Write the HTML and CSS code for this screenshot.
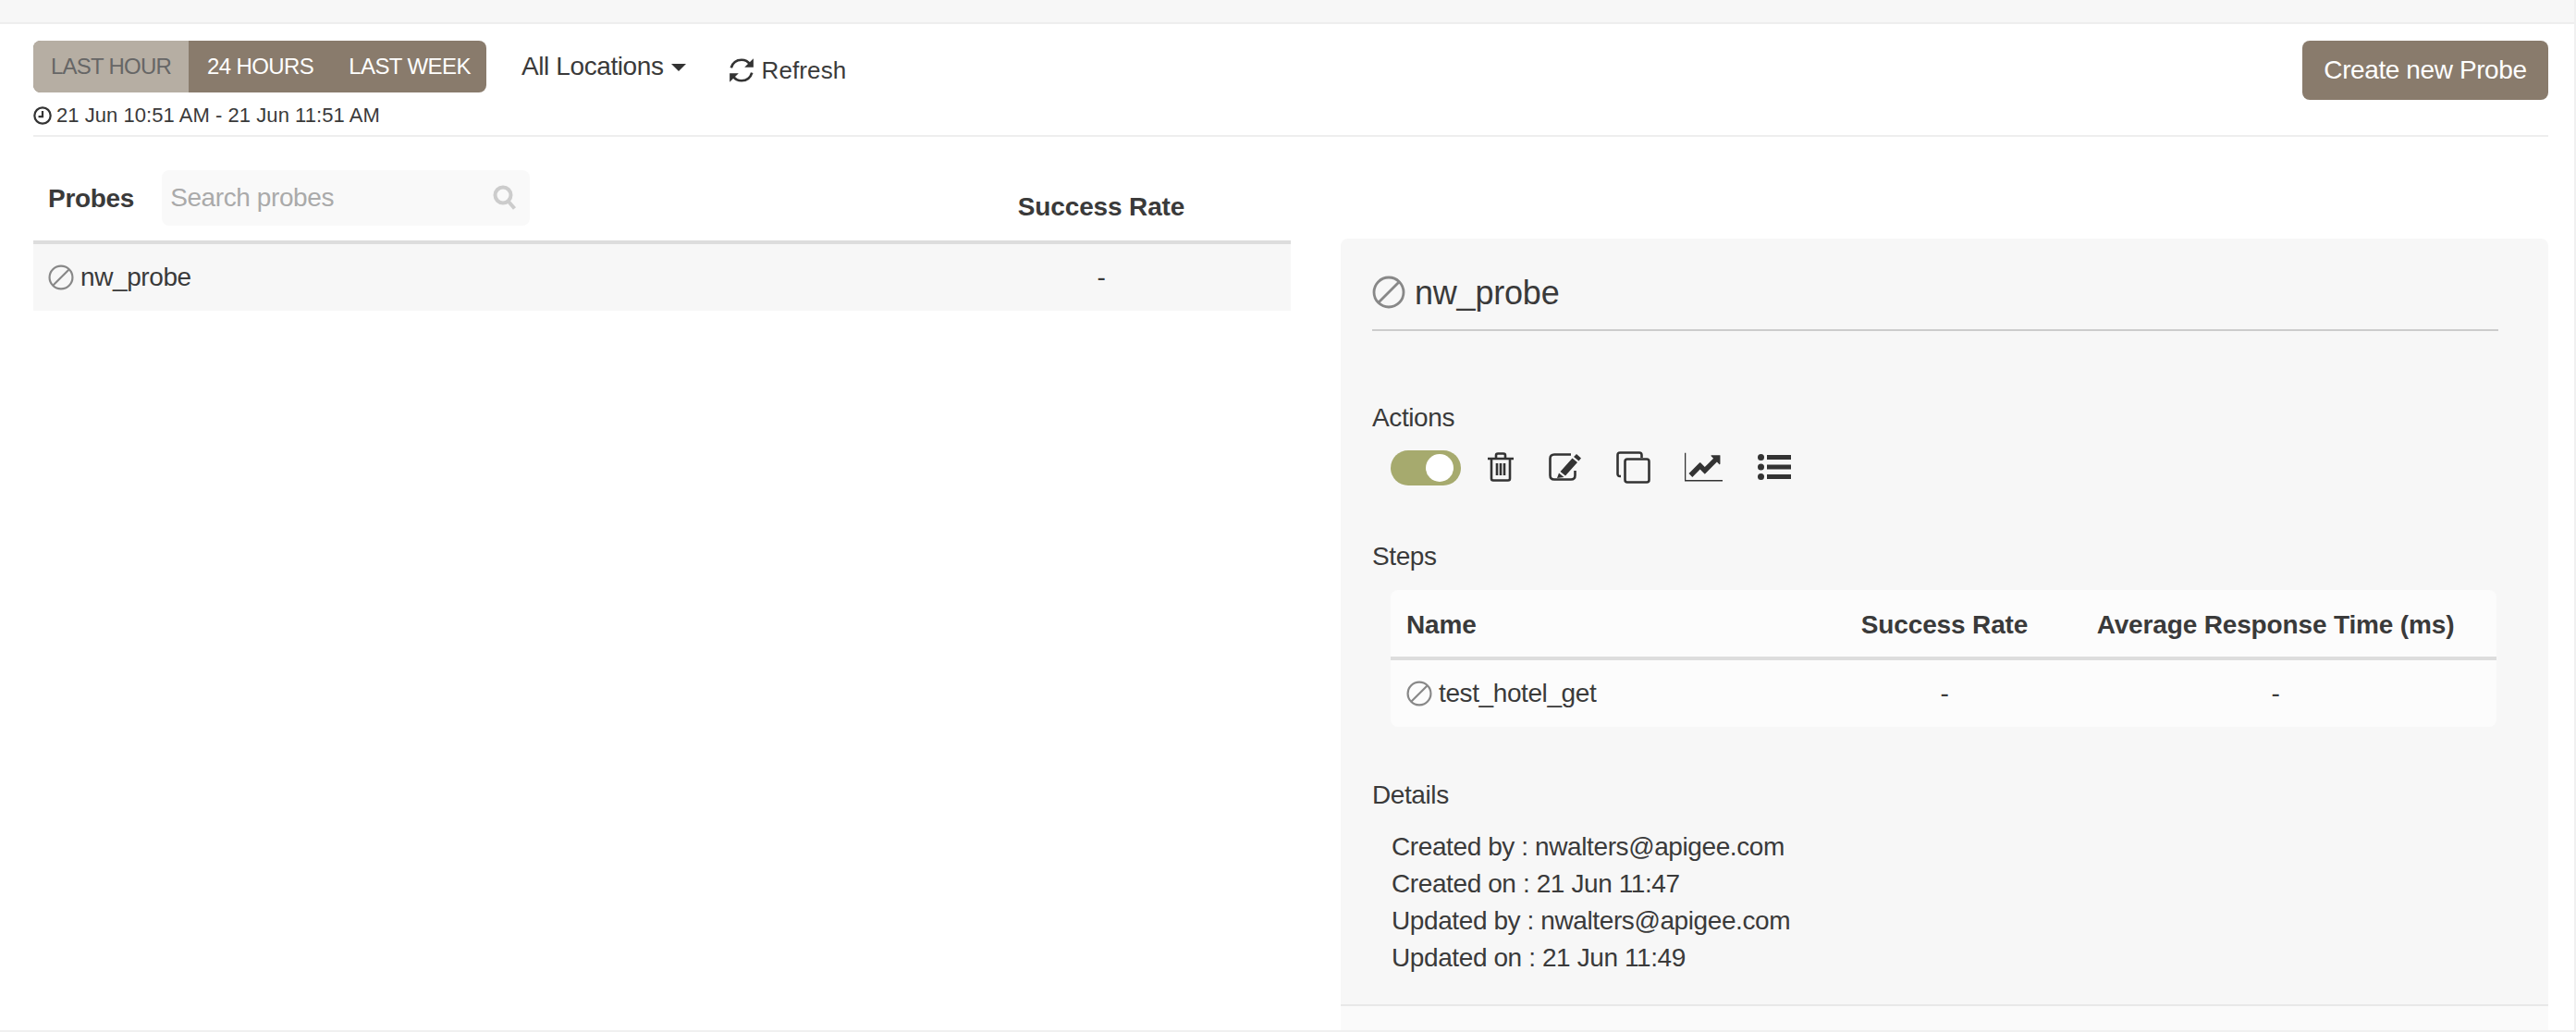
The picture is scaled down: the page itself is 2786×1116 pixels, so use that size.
FILE: index.html
```html
<!DOCTYPE html>
<html lang="en">
<head>
<meta charset="utf-8">
<title>Probes</title>
<link rel="stylesheet" href="styles.css">
</head>
<body>
<div class="page">
  <div class="topbar"></div>
  <main class="content">
    <header class="toolbar">
      <div class="toolbar-left">
        <div class="controls">
          <div class="range-group">
            <span class="range range-active">LAST HOUR</span>
            <span class="range">24 HOURS</span>
            <span class="range range-week">LAST WEEK</span>
          </div>
          <span class="locations">All Locations<svg class="caret" viewBox="0 0 14 7"><path d="M0 0h14L7 7z"/></svg></span>
          <span class="refresh"><svg class="refresh-icon" viewBox="0 0 28 28"><path class="line" d="M3.500 11.500C5 6.500 9 3.500 14 3.500c3.500 0 6.500 1.500 8.500 4.500M24.500 16.500C23 21.500 19 24.500 14 24.500c-3.500 0-6.500-1.500-8.500-4.500"/><path d="M26 2v9h-9zM2 26v-9h9z"/></svg>Refresh</span>
        </div>
        <div class="date-range"><svg class="clock" viewBox="0 0 18 18"><circle cx="9" cy="9" r="7.800"/><path d="M9 4.500V10H5"/></svg>21 Jun 10:51 AM - 21 Jun 11:51 AM</div>
      </div>
      <button class="create-btn">Create new Probe</button>
    </header>

    <div class="columns">
      <section class="probes">
        <div class="probes-head">
          <div class="probes-title">
            <strong class="probes-label">Probes</strong>
            <div class="search"><span>Search probes</span><svg class="search-icon" viewBox="0 0 26 28"><circle cx="11" cy="11" r="8.500"/><path d="M17 18l6.500 7.500"/></svg></div>
          </div>
          <div class="rate-head">Success Rate</div>
        </div>
        <div class="probe-row">
          <div class="probe-name"><svg class="ban ban-sm" viewBox="0 0 36 36"><circle cx="18" cy="18" r="16"/><path d="M7 29L29 7"/></svg>nw_probe</div>
          <div class="rate-cell">-</div>
        </div>
      </section>

      <section class="detail">
        <h2 class="detail-title"><svg class="ban ban-lg" viewBox="0 0 36 36"><circle cx="18" cy="18" r="16"/><path d="M7 29L29 7"/></svg><span class="detail-name">nw_probe</span></h2>
        <h3 class="section-label actions-label">Actions</h3>
        <div class="actions">
          <span class="toggle"><span class="knob"></span></span>
          <svg class="ic ic-trash" viewBox="0 0 28 32"><path class="line" d="M0 7h28M9 7V3.500Q9 1.500 11 1.500h6Q19 1.500 19 3.500V7M4 7v21.500Q4 30.500 6 30.500h16q2 0 2-2V7M10 12v13M14 12v13M18 12v13"/></svg>
          <svg class="ic ic-edit" viewBox="0 0 35 30"><path class="line" d="M24 1.500H6Q1.500 1.500 1.500 6v18Q1.500 28.500 6 28.500h18q4.500 0 4.500-4.500v-5"/><path d="M30 1l5 4.500-2.500 3-5.500-4.500zM25.500 5.500l5.500 4.500-13 14.500-5.500-4.500zM11 21.500l5.500 4.500L9 27z"/></svg>
          <svg class="ic ic-copy" viewBox="0 0 37 35"><path class="line" d="M5 27H4Q1.500 27 1.500 24.500V4Q1.500 1.500 4 1.500h21Q27.500 1.500 27.500 4v3"/><rect class="line" x="9.500" y="8.500" width="26" height="25" rx="2.500"/></svg>
          <svg class="ic ic-chart" viewBox="0 128 2048 1536"><path d="M2048 1600v64h-2048v-1536h64v1472h1984zm-128-1312v435q0 21-19.500 29.500t-35.500-7.500l-121-121-633 633q-10 10-23 10t-23-10l-233-233-416 416-192-192 585-585q10-10 23-10t23 10l233 233 464-464-121-121q-16-16-7.500-35.500t29.500-19.500h435q14 0 23 9t9 23z"/></svg>
          <svg class="ic ic-list" viewBox="0 0 36 28"><circle cx="3.500" cy="3.500" r="3.500"/><circle cx="3.500" cy="14" r="3.500"/><circle cx="3.500" cy="24.500" r="3.500"/><rect x="10" y="1" width="26" height="5"/><rect x="10" y="11.500" width="26" height="5"/><rect x="10" y="22" width="26" height="5"/></svg>
        </div>

        <h3 class="section-label steps-label">Steps</h3>
        <div class="steps">
          <div class="steps-head">
            <div class="step-name-head">Name</div>
            <div class="step-center">Success Rate</div>
            <div class="step-center">Average Response Time (ms)</div>
          </div>
          <div class="steps-row">
            <div class="step-name"><svg class="ban ban-sm" viewBox="0 0 36 36"><circle cx="18" cy="18" r="16"/><path d="M7 29L29 7"/></svg>test_hotel_get</div>
            <div class="step-center">-</div>
            <div class="step-center">-</div>
          </div>
        </div>

        <h3 class="section-label details-label">Details</h3>
        <ul class="meta">
          <li>Created by : nwalters@apigee.com</li>
          <li>Created on : 21 Jun 11:47</li>
          <li>Updated by : nwalters@apigee.com</li>
          <li>Updated on : 21 Jun 11:49</li>
        </ul>
        <div class="detail-foot"></div>
      </section>
    </div>
  </main>
</div>
</body>
</html>
```
FILE: styles.css
```css
* { box-sizing: border-box; }
html, body { margin: 0; padding: 0; background: #fff; }
body {
  font-family: "Liberation Sans", Arial, sans-serif;
  color: #3a3a3a;
  font-size: 28px;
  letter-spacing: -0.4px;
}
.page { height: 1116px; overflow: hidden; border-right: 2px solid #f0f0f0; border-bottom: 2px solid #f0f0f0; }
.topbar { height: 26px; background: #f7f7f7; border-bottom: 2px solid #eee; }
.content { padding: 18px 28px 0 36px; }

.toolbar { display: flex; justify-content: space-between; align-items: flex-start; height: 104px; border-bottom: 2px solid #eee; }
.controls { display: flex; align-items: flex-start; }
.range-group { display: flex; height: 56px; width: 490px; background: #897b6c; border-radius: 8px; overflow: hidden; }
.range { display: flex; align-items: center; height: 56px; padding: 0 20px; font-size: 24px; letter-spacing: -0.6px; color: #fff; white-space: nowrap; }
.range-active { width: 168px; padding: 0 19px; background: #b6aea3; color: #666; letter-spacing: -0.75px; }
.range-week { padding-left: 18px; }
.locations { display: flex; align-items: center; margin-left: 38px; height: 56px; }
.caret { width: 16px; height: 8px; margin-left: 8px; margin-top: 2px; fill: #333; }
.refresh { display: flex; align-items: center; margin-left: 45px; height: 64px; font-size: 26px; letter-spacing: 0.1px; }
.refresh-icon { width: 30px; height: 30px; margin-right: 7px; fill: #333; }
.refresh-icon .line { fill: none; stroke: #333; stroke-width: 2.500; }
.date-range { display: flex; align-items: center; margin-top: 3px; height: 28px; font-size: 22px; letter-spacing: 0.05px; }
.clock { width: 20px; height: 20px; margin-right: 5px; fill: none; stroke: #333; stroke-width: 2; }
.create-btn { width: 266px; height: 64px; padding: 0; border: 0; border-radius: 8px; background: #897b6c; color: #fff; font: inherit; letter-spacing: inherit; }

.columns { display: grid; grid-template-columns: 1360px 1306px; column-gap: 54px; }

.probes-head { display: grid; grid-template-columns: 950px 410px; height: 116px; border-bottom: 4px solid #ddd; }
.probes-title { display: flex; align-items: flex-start; padding: 36px 0 0 16px; }
.probes-label { line-height: 61px; font-weight: 700; letter-spacing: -0.3px; }
.search { display: flex; justify-content: space-between; align-items: center; width: 398px; height: 60px; margin-left: 30px; padding: 0 14px 0 9px; background: #f9f9f9; border-radius: 8px; color: #aaa; }
.search-icon { width: 26px; height: 28px; fill: none; stroke: #ccc; stroke-width: 4; }
.rate-head { padding-top: 60px; text-align: center; font-weight: 700; letter-spacing: -0.15px; }
.probe-row { display: grid; grid-template-columns: 950px 410px; align-items: center; height: 72px; background: #f7f7f7; }
.probe-name { display: flex; align-items: center; padding-left: 16px; }
.rate-cell { text-align: center; }

.ban { fill: none; stroke: #888; stroke-width: 2.800; flex: none; }
.ban-sm { width: 28px; height: 28px; margin-right: 7px; }
.ban-lg { width: 36px; height: 36px; margin-right: 10px; }

.detail { margin-top: 110px; height: 856px; padding: 40px 0 0 34px; background: #f7f7f7; border-radius: 8px 8px 0 0; }
.detail-title { display: flex; align-items: center; width: 1218px; height: 60px; margin: 0; padding-bottom: 22px; font-size: 36px; font-weight: 400; letter-spacing: -0.2px; border-bottom: 2px solid #ccc; }
.detail-name { padding-top: 2px; }
.section-label { margin: 0; font-size: 28px; font-weight: 400; line-height: 32px; }
.actions-label { margin-top: 78px; }
.actions { display: flex; align-items: center; height: 40px; margin: 17px 0 0 20px; }
.toggle { display: flex; align-items: center; justify-content: flex-end; width: 76px; height: 38px; margin-top: 2px; padding-right: 8px; background: #a6aa6e; border-radius: 19px; }
.knob { width: 30px; height: 30px; background: #fff; border-radius: 50%; }
.ic { flex: none; fill: #333; }
.ic .line { fill: none; stroke: #333; stroke-width: 2.600; }
.ic-trash { width: 28px; height: 32px; margin-left: 29px; }
.ic-edit { width: 35px; height: 30px; margin-left: 38px; }
.ic-copy { width: 37px; height: 35px; margin-left: 38px; }
.ic-chart { width: 41px; height: 32px; margin-left: 37px; }
.ic-list { width: 36px; height: 28px; margin-left: 38px; }
.steps-label { margin-top: 61px; }
.steps { width: 1196px; margin: 20px 0 0 20px; background: #fcfcfc; border-radius: 8px; }
.steps-head, .steps-row { display: grid; grid-template-columns: 480px 238px 478px; align-items: center; }
.steps-head { height: 76px; font-weight: 700; border-bottom: 4px solid #ddd; padding-top: 4px; letter-spacing: -0.15px; }
.steps-row { height: 72px; }
.step-name-head { padding-left: 17px; }
.step-name { display: flex; align-items: center; padding-left: 17px; }
.step-center { text-align: center; }
.details-label { margin-top: 58px; }
.meta { list-style: none; margin: 20px 0 0 21px; padding: 0; letter-spacing: -0.4px; }
.meta li { line-height: 40px; }
.detail-foot { height: 28px; margin: 30px 0 0 -34px; background: #fafafa; border-top: 2px solid #e8e8e8; }
```
